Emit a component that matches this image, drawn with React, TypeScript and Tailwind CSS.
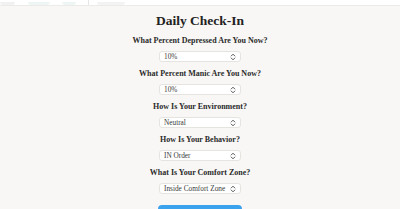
import React from 'react';

const questions = [
  { label: 'What Percent Depressed Are You Now?', value: '10%' },
  { label: 'What Percent Manic Are You Now?', value: '10%' },
  { label: 'How Is Your Environment?', value: 'Neutral' },
  { label: 'How Is Your Behavior?', value: 'IN Order' },
  { label: 'What Is Your Comfort Zone?', value: 'Inside Comfort Zone' },
];

const serif = { fontFamily: '"Liberation Serif", "DejaVu Serif", serif' };

function Chevrons() {
  return (
    <svg width="6" height="8" viewBox="0 0 6 8" fill="none" stroke="#555" strokeWidth="1" strokeLinecap="round" strokeLinejoin="round">
      <path d="M1.2 3 3 1.2 4.8 3" />
      <path d="M1.2 5 3 6.8 4.8 5" />
    </svg>
  );
}

function Question({ label, value }: { label: string; value: string }) {
  return (
    <div className="flex flex-col items-center">
      <div className="h-[12px] whitespace-nowrap text-[8px] font-bold leading-[12px] text-[#2b2b2b]">{label}</div>
      <div className="mt-[4px] flex h-[11px] w-[82px] items-center justify-between rounded-[3px] border border-[#e6e4e0] bg-white pl-[4px] pr-[4px] text-[7.3px] leading-none text-[#3a3a3a]">
        <span className="whitespace-nowrap">{value}</span>
        <Chevrons />
      </div>
    </div>
  );
}

export default function App() {
  return (
    <div className="h-[209px] w-[400px] overflow-hidden bg-[#f8f7f5]" style={serif}>
      <header className="flex h-[6px] items-end border-b border-[#ecebe8] bg-white">
        <div className="h-[3px] w-[15px] rounded-b-[3px] bg-[#f1f1f1]" />
        <div className="ml-[13px] h-[3px] w-[22px] rounded-b-[3px] bg-[#eef6f5]" />
        <div className="ml-[12px] h-[3px] w-[14px] rounded-b-[3px] bg-[#eef6f5]" />
        <div className="ml-[12px] h-[5px] w-px bg-[#e6e6e6]" />
        <div className="ml-[8px] h-[3px] w-[28px] rounded-b-[3px] bg-[#f3f3f3]" />
      </header>
      <main className="flex flex-col items-center">
        <h1 className="mt-[5px] h-[20px] text-[13.5px] font-bold leading-[20px] text-[#222]">Daily Check-In</h1>
        <div className="mt-[4px] flex flex-col items-center gap-[6px]">
          {questions.map((q) => (
            <Question key={q.label} label={q.label} value={q.value} />
          ))}
        </div>
        <button className="mt-[11px] h-[30px] w-[84px] shrink-0 rounded-[4px] bg-[#3ba2ee] text-[9px] text-white">
          Submit
        </button>
      </main>
    </div>
  );
}
